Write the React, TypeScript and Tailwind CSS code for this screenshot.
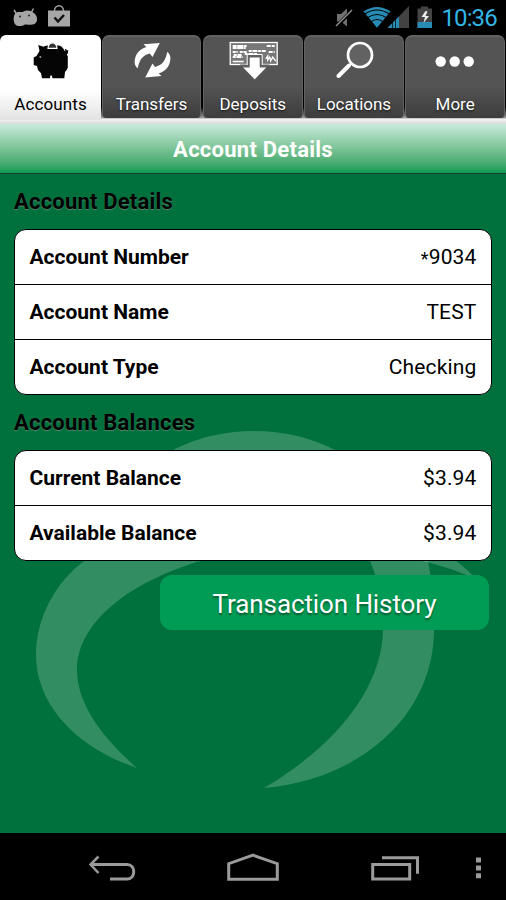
import type { ReactNode } from "react";

function PiggyIcon() {
  return (
    <svg width="38" height="40" viewBox="32 40 38 40" className="block">
      <path
        d="M38.300 45L43.500 46.800C46 45.300 48 45.500 50 45.500H58C61 45.500 63.500 47.500 64.200 50.500L65.500 51.300 64.800 49.300 66 49 67 50.500 68.300 50 67.800 53.500 66.800 54.500 67.800 56.500V67.500C67.500 69.500 65.500 71 65 72L64.300 78.300H52.500L51.800 75.500H50.300L50 78.300H42L41 73.200 38 70 37 66 33.700 65V57.500L36.500 56 39.500 51Z"
        fill="#050505"
      />
      <path d="M48 48.300C48.500 41 56.500 41 57 48.300Z" fill="#333" stroke="#fff" strokeWidth="1.200" />
      <circle cx="40.300" cy="57" r="1" fill="#999" />
    </svg>
  );
}

function TransferIcon() {
  const arrow = "M137 68.300C135 67 134 65 133.800 62.500C134 54.500 138.500 49 145.500 47L142.700 44.300 159 43 151.700 57 149 53.500C142 55 138.500 60 137 68.300Z";
  return (
    <svg width="42" height="40" viewBox="130.200 40 42 40" className="block" fill="#fff">
      <path d={arrow} />
      <path d={arrow} transform="rotate(180 151.700 60.200)" />
    </svg>
  );
}

function DepositIcon() {
  return (
    <svg width="52" height="40" viewBox="226.300 40 52 40" className="block">
      <rect x="229.500" y="42.500" width="47" height="22" fill="#777" stroke="#fff" strokeWidth="1.300" />
      <g fill="none" stroke="#fff">
        <path d="M232 46h14M232 48h13" strokeWidth="2" strokeDasharray="4 .5 6 .5" />
        <path d="M266 46h8M268 52h6" strokeWidth="2" strokeDasharray="4 1" />
        <path d="M232 52h5M239 52h7M248 51h17M233 55h8M244 54h13M232 57h10" strokeWidth="2" strokeDasharray="3 .7 5 .7" />
        <path d="M232 61.500h11M265 59l2-3v4l2-3 1 4 2-4 3 4" strokeWidth="1.300" />
      </g>
      <path d="M246.500 54.500h15v10h7.500L254 81l-15-16.500h7.500z" fill="#606060" />
      <path d="M246.500 65V54.500h15V65" fill="none" stroke="#fff" />
      <path d="M249 57.500h10v10h6.500L254 79.200l-11.500-11.700h6.500z" fill="#fff" />
    </svg>
  );
}

function SearchIcon() {
  return (
    <svg width="44" height="40" viewBox="331.500 40 44 40" className="block">
      <circle cx="359.500" cy="55" r="12" fill="#626262" stroke="#fff" strokeWidth="2.700" />
      <path d="M351 63l-3.500 3.500" stroke="#fff" strokeWidth="2" />
      <path d="M348.500 65.500L338 76" stroke="#fff" strokeWidth="4" strokeLinecap="round" />
    </svg>
  );
}

function MoreIcon() {
  return (
    <svg width="44" height="40" viewBox="433 40 44 40" className="block" fill="#fff">
      <circle cx="440.700" cy="61.500" r="5.200" />
      <circle cx="454.700" cy="61.500" r="5.200" />
      <circle cx="468.700" cy="61.500" r="5.200" />
    </svg>
  );
}

function StatusBar() {
  return (
    <div className="flex h-[35px] items-start justify-between bg-black">
      <svg width="80" height="35" viewBox="0 0 80 35">
        <path d="M16 13l-2-3M31 13l2.500-4.500" stroke="#a6a6a6" strokeWidth="1.500" />
        <path d="M15 13.500c3-3 6-.5 8.500-2 4-2 8-.5 11 2 3.500 3 3.500 8.500 0 10.500-3 1.500-7 0-9.500.5-4 2.500-9 2-10.500-1-1.500-3.500-1-7.500.5-10z" fill="#a6a6a6" />
        <circle cx="20" cy="16.500" r="1" fill="#222" />
        <circle cx="29" cy="15.500" r="1" fill="#222" />
        <path d="M48 10.500h22v16H48z" fill="#a6a6a6" />
        <path d="M54.500 11c0-7 9-7 9 0" fill="none" stroke="#a6a6a6" strokeWidth="1.400" />
        <path d="M54.500 17.500l3.500 4 6-6.500" fill="none" stroke="#111" strokeWidth="2.500" />
      </svg>
      <div className="flex">
        <svg width="116" height="35" viewBox="320 0 116 35">
          <path d="M337 14h4l6-5.500v18l-6-5h-4z" fill="#707070" />
          <path d="M336.500 26.500L352 10.500" stroke="#000" strokeWidth="3.500" />
          <path d="M336 26L352 10" stroke="#909090" strokeWidth="1.400" />
          <path d="M377 27.800L363.500 11.500Q377 2.500 390.500 11.500Z" fill="#278bb4" />
          <g fill="none" stroke="#000" strokeWidth="1.100">
            <path d="M364 14.500Q377 5.500 390 14.500M367 18Q377 11 387 18M370.500 22Q377 17 383.500 22" />
          </g>
          <path d="M409 6v22h-21.500z" fill="#424242" />
          <path d="M399 16.500v11.500h-11.500z" fill="#278bb4" />
          <path d="M392.500 18v10M395.500 18v10" stroke="#000" strokeWidth=".7" />
          <path d="M421 6.500h7V8.500h4V28h-14.500V8.500h3.500z" fill="#444" />
          <path d="M417.500 22H432v6h-14.500z" fill="#278bb4" />
          <path d="M425.500 11l-4 6h3.500l-1.500 6 5.500-7h-3.500l2-4.500z" fill="#eee" />
        </svg>
        <span className="h-[35px] w-[70px] pl-[5.500px] text-[24px] leading-[36px] tracking-[-0.900px] text-[#33b5e5]">
          10:36
        </span>
      </div>
    </div>
  );
}

function Tab({ label, icon, active = false }: { label: string; icon: ReactNode; active?: boolean }) {
  return (
    <div
      className={
        active
          ? "flex h-[85px] flex-col items-center rounded-t-[6px] bg-linear-to-b from-white from-65% to-[#e2e2e2] pt-[5px]"
          : "mr-[1px] ml-[.5px] flex h-[83px] flex-col items-center rounded-t-[7px] rounded-b-[4px] border-x border-t-2 border-[#626262] bg-linear-to-b from-[#545454] from-60% to-[#3d3d3d] pt-[3px]"
      }
    >
      {icon}
      <span
        className={
          active
            ? "mt-[14px] text-[17px] leading-[20px] tracking-[0.100px] text-black"
            : "mt-[14px] text-[17px] leading-[20px] tracking-[-0.020px] text-white [text-shadow:0_1px_2px_#111]"
        }
      >
        {label}
      </span>
    </div>
  );
}

function Section({ title, rows }: { title: string; rows: [string, string][] }) {
  return (
    <section className="px-[14px]">
      <h2 className="h-[55px] pt-[13px] text-[22px] leading-[30px] font-bold tracking-[0.200px] text-black [text-shadow:0_1px_1px_#53866b]">
        {title}
      </h2>
      <div className="divide-y divide-black overflow-hidden rounded-[12px] border border-black bg-white">
        {rows.map(([name, value]) => (
          <div key={name} className="flex h-[55px] items-center justify-between px-[14.500px] pt-[2px] text-[21px] text-black last:h-[54px]">
            <span className="font-bold">{name}</span>
            {value.startsWith("*") ? (
              <span className="tracking-[0.150px]">
                <span className="align-[-1px] text-[18px] leading-none">*</span>
                {value.slice(1)}
              </span>
            ) : (
              <span className="tracking-[0.150px]">{value}</span>
            )}
          </div>
        ))}
      </div>
    </section>
  );
}

function NavBar() {
  return (
    <nav className="h-[67px] bg-black">
      <svg width="506" height="67" viewBox="0 833 506 67" fill="none" stroke="#9b9b9b" strokeWidth="3">
        <path d="M91 864.500h36c9 0 9 14.500 0 14.500h-17" />
        <path d="M98.500 856.500l-8 8 8 8.500" strokeWidth="2.500" />
        <path d="M228.700 879.200v-15.500l24.300-8.500 24.300 8.500v15.500z" />
        <path d="M372.700 864.600h37v14.500h-37z" />
        <path d="M382 857.700h35.500v16" />
        <path d="M478.500 857.500v5M478.500 865.500v5M478.500 873.300v5" strokeWidth="5" />
      </svg>
    </nav>
  );
}

export default function App() {
  return (
    <div className="flex h-[900px] w-[506px] flex-col overflow-hidden bg-black font-['Roboto',sans-serif]">
      <StatusBar />
      <div className="grid h-[89px] grid-cols-5 items-start bg-[linear-gradient(to_bottom,#000_0,#000_72px,#a0a0a0_83px,#f4f4f4_84px,#d9d9d9_89px)]">
        <Tab active label="Accounts" icon={<PiggyIcon />} />
        <Tab label="Transfers" icon={<TransferIcon />} />
        <Tab label="Deposits" icon={<DepositIcon />} />
        <Tab label="Locations" icon={<SearchIcon />} />
        <Tab label="More" icon={<MoreIcon />} />
      </div>
      <h1 className="h-[50px] border-b border-[#203a2c] bg-linear-to-b from-[#c8eada] to-[#009c55] text-center text-[22px] leading-[52px] font-bold tracking-[0.250px] text-white">
        Account Details
      </h1>
      <main className="relative h-[659px] bg-[#00713d]">
        <svg className="absolute inset-0" width="506" height="659" viewBox="0 174 506 659" fill="#fff" fillOpacity=".2">
          <path d="M137 768C75 747 36 704 36 655C36 618 55 583 84 561C200 500 400 500 456 561Q466 568 476 579Q449 567 422 561C330 540 260 545 200 561C130 582 77 622 77 670C77 700 97 733 137 768Z" />
          <path d="M173 450Q210 431 254 431Q298 431 335 450C385 475 420 515 428 561Q434 590 434 630C434 715 360 780 264 788C340 743 383 685 383 628Q382 588 370 561L350 520L200 500Z" />
        </svg>
        <div className="relative">
          <Section title="Account Details" rows={[["Account Number", "*9034"], ["Account Name", "TEST"], ["Account Type", "Checking"]]} />
          <Section title="Account Balances" rows={[["Current Balance", "$3.94"], ["Available Balance", "$3.94"]]} />
          <button className="mt-[14px] ml-[160px] block h-[55px] w-[329px] rounded-[12px] bg-[#009c55] pt-[3px] text-[26px] tracking-[-0.100px] text-white [text-shadow:0_2px_2px_#00592f]">
            Transaction History
          </button>
        </div>
      </main>
      <NavBar />
    </div>
  );
}
